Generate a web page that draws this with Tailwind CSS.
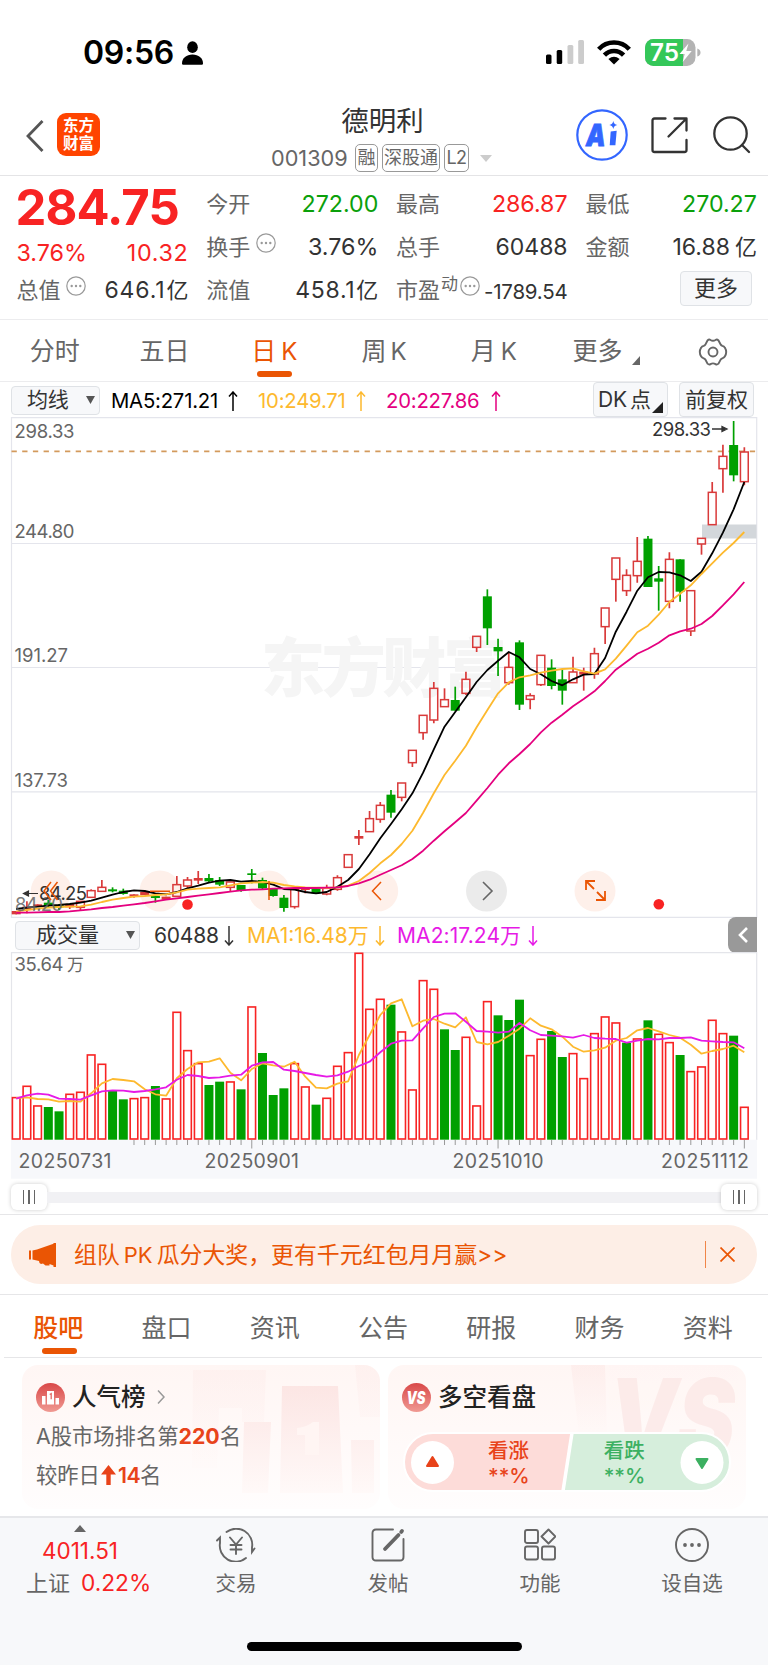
<!DOCTYPE html>
<html lang="zh-CN">
<head>
  <meta charset="UTF-8" />
  <meta name="viewport" content="width=device-width, initial-scale=1.0"/>
  <title>德明利 001309</title>
  <script src="https://cdn.jsdelivr.net/npm/@tailwindcss/browser@4"></script>
</head>
<body class="w-[768px] h-[1665px] overflow-hidden bg-white text-[#333] whitespace-nowrap font-['Inter','Noto_Sans_CJK_SC',sans-serif]">

  <!-- status bar -->
  <div class="h-[105px] flex justify-between items-start pt-[33px] pl-[83px] pr-[67px] text-black">
    <div class="flex items-center h-10 gap-[8px]">
      <span class="text-[32px] font-semibold leading-10 tracking-[-0.3px]">09:56</span>
      <svg class="w-[21px] h-6" viewBox="0 0 21 24"><ellipse cx="10.5" cy="6.2" rx="5.3" ry="5.9"/><path d="M0 22.5C0 17 4.5 13.5 10.5 13.5S21 17 21 22.5q0 1.2-1.2 1.2H1.2Q0 23.7 0 22.5z"/></svg>
    </div>
    <div class="flex items-center h-10 -mt-[1px]">
      <svg class="w-[38px] h-6" viewBox="0 0 38 24"><rect y="14.500" width="5.500" height="9.500" rx="1.500"/><rect x="10.700" y="10" width="5.500" height="14" rx="1.500"/><rect x="21.500" y="5" width="5.800" height="19" rx="1.500" fill="#ccc"/><rect x="32.200" width="5.800" height="24" rx="1.500" fill="#ccc"/></svg>
      <svg class="w-[34px] h-[25px] ml-[13px]" viewBox="0 0 34 25" fill="none" stroke="#000" stroke-width="4.600"><path d="M1.700 9.200C10 .3 24 .3 32.300 9.200"/><path d="M7.400 15.200C12.800 9.600 21.200 9.600 26.600 15.200"/><path d="M17 24.500l-5.600-5.400q5.600-4.600 11.200 0z" fill="#000" stroke="none"/></svg>
      <svg class="w-[56px] h-[27px] ml-[14px] overflow-visible" viewBox="0 0 56 27">
        <defs><clipPath id="batt"><rect width="50.500" height="27" rx="8.500"/></clipPath></defs>
        <g clip-path="url(#batt)"><rect width="51" height="27" fill="#b3b3b3"/><rect width="38" height="27" fill="#34c759"/></g>
        <path d="M52.300 9.500q3.200 1 3.200 4t-3.200 4z" fill="#b3b3b3"/>
        <text x="5" y="22.300" font-size="24.500" font-weight="600" fill="#fff" textLength="29" lengthAdjust="spacingAndGlyphs">75</text>
        <path d="M43.500 4.500L34.500 15h5.200l-2 8 9-11h-5.400z" fill="#fff"/>
      </svg>
    </div>
  </div>

  <!-- nav -->
  <header class="h-[71px] flex items-start border-b border-[#e4e4e6] pl-[26px]">
    <svg class="w-[18px] h-8 mt-[15px]" viewBox="0 0 18 32" fill="none" stroke="#555" stroke-width="2.800"><path d="M16.500 1L2 16l14.500 15"/></svg>
    <div class="ml-[13px] mt-2 size-[43px] rounded-[9px] bg-[#ff4400] text-white text-[15.500px] leading-[18px] font-bold text-center pt-[4px]">东方<br>财富</div>
    <div class="ml-[171px] w-[223px] mt-[-2px] flex flex-col">
      <h1 class="text-[27.500px] leading-[36px] self-center">德明利</h1>
      <div class="flex items-center text-[#666] h-[38px]">
        <span class="w-[84px] text-[21.700px]">001309</span>
        <span class="h-7 border border-[#999] rounded-[5px] w-[23px] text-[18px] leading-[26px] flex justify-center">融</span>
        <span class="ml-1 h-7 border border-[#999] rounded-[5px] w-[58px] text-[18px] leading-[26px] flex justify-center">深股通</span>
        <span class="ml-1 h-7 border border-[#999] rounded-[5px] w-[25px] text-[18px] leading-[26px] flex justify-center tracking-[-0.5px]">L2</span>
        <svg class="w-3 h-[7px] ml-[11px]" viewBox="0 0 12 7"><path d="M0 0h12L6 7z" fill="#ccc"/></svg>
      </div>
    </div>
    <svg class="w-[52px] h-[52px] ml-[82px] mt-[4px]" viewBox="0 0 52 52">
      <circle cx="26" cy="26" r="24.700" fill="#fff" stroke="#3366ff" stroke-width="2.200"/>
      <text x="10" y="36.500" font-size="30" font-weight="900" font-style="italic" fill="#3366ff" stroke="#3366ff" stroke-width=".8" textLength="19.500" lengthAdjust="spacingAndGlyphs">A</text>
      <path d="M34.700 22.500l6-.8-1.300 14.500h-5.700z" fill="#3366ff"/><path d="M37.300 12q.6 3.500 4 4-3.400.6-4 4-.6-3.400-4-4 3.400-.5 4-4z" fill="#3366ff"/>
    </svg>
    <svg class="w-[37px] h-[37px] ml-[23px] mt-3" viewBox="0 0 37 37" fill="none" stroke="#333" stroke-width="2.300" stroke-linecap="round" stroke-linejoin="round"><path d="M14.500 1.500H3.500q-2 0-2 2v29.500q0 2 2 2H33.500q2 0 2-2V23M23.500 1.500h12v12M35 2L17.500 19.500"/></svg>
    <svg class="w-[38px] h-[38px] ml-[25px] mt-[11px]" viewBox="0 0 38 38" fill="none" stroke="#333" stroke-width="2.300" stroke-linecap="round"><circle cx="17.500" cy="17.500" r="16.200"/><path d="M29 29l7 7"/></svg>
  </header>

  <!-- quote -->
  <section class="h-[144px] border-b border-[#ececee] grid grid-cols-[172px_172px_171.5px_171.5px] gap-x-[17.8px] pl-[16.5px] text-[22px] leading-[30px]">
    <div>
      <div class="text-[49px] leading-[60px] font-bold text-[#f82323] tracking-[-0.9px] ml-[-1px] mt-[2px]">284.75</div>
      <div class="flex justify-between text-[#f82323] text-[23.300px]"><span>3.76%</span><span class="tracking-[0.7px]">10.32</span></div>
      <div class="flex justify-between mt-[7px]"><span class="flex text-[#666] gap-[5px]">总值<svg class="size-5 shrink-0 mt-px" viewBox="0 0 20 20"><use href="#dots"/></svg></span><span class="text-[23px] tracking-[0.9px]">646.1<i class="not-italic text-[22px] ml-px tracking-normal">亿</i></span></div>
    </div>
    <div class="pt-[13px] space-y-[13px]">
      <div class="flex justify-between"><span class="text-[#666]">今开</span><span class="text-[#0ba00b] text-[23.200px]">272.00</span></div>
      <div class="flex justify-between"><span class="flex text-[#666] gap-[6px]">换手<svg class="size-5 shrink-0 mt-px" viewBox="0 0 20 20"><use href="#dots"/></svg></span><span class="text-[23.300px]">3.76%</span></div>
      <div class="flex justify-between"><span class="text-[#666]">流值</span><span class="text-[23px] tracking-[0.7px]">458.1<i class="not-italic text-[22px] ml-px tracking-normal">亿</i></span></div>
    </div>
    <div class="pt-[13px] space-y-[13px]">
      <div class="flex justify-between"><span class="text-[#666]">最高</span><span class="text-[#f82323] text-[23.200px]">286.87</span></div>
      <div class="flex justify-between"><span class="text-[#666]">总手</span><span class="text-[23px]">60488</span></div>
      <div class="flex justify-between"><span class="flex text-[#666]">市盈<i class="not-italic text-[17px] leading-[19px] ml-px">动</i><svg class="size-5 shrink-0 mt-px ml-[2px]" viewBox="0 0 20 20"><use href="#dots"/></svg></span><span class="text-[20.500px] leading-[34px] tracking-[-0.2px]">-1789.54</span></div>
    </div>
    <div class="pt-[13px] space-y-[13px]">
      <div class="flex justify-between"><span class="text-[#666]">最低</span><span class="text-[#0ba00b] text-[23.200px]">270.27</span></div>
      <div class="flex justify-between"><span class="text-[#666]">金额</span><span class="text-[23px]">16.88<i class="not-italic text-[22px] ml-[5px]">亿</i></span></div>
      <div class="flex justify-end"><button class="w-[72px] h-[35px] mt-[-4px] mr-[5px] rounded border border-[#dfe2e6] bg-[#f7f8fa] leading-[33px]">更多</button></div>
    </div>
  </section>

  <!-- period tabs -->
  <nav class="h-[62px] grid grid-cols-7 border-b border-[#ececee] text-[25px] leading-[62px] text-[#666] text-center">
    <span>分时</span>
    <span>五日</span>
    <span class="relative text-[#ea5504]">日<i class="not-italic ml-[5px] text-[24px]">K</i><b class="absolute left-[38px] top-[51px] w-[35px] h-[5.500px] rounded-full bg-[#ea5504]"></b></span>
    <span>周<i class="not-italic ml-[4px] text-[24px]">K</i></span>
    <span>月<i class="not-italic ml-[5px] text-[24px]">K</i></span>
    <span class="relative pr-[12px]">更多<svg class="absolute w-2 h-[9px] right-[18px] top-[36px]" viewBox="0 0 8 9"><path d="M8 0v9H0z" fill="#666"/></svg></span>
    <span class="flex items-center justify-center"><svg class="w-[30px] h-[28px]" viewBox="0 0 30 28" fill="none" stroke="#666" stroke-width="1.900" stroke-linejoin="round"><path d="M9.500 2.500q1.500-1.500 3-.5 2.500 1.500 5 0 1.500-1 3 .5l2 3.800q.5 1 1.800 1.500 1.800.5 2.500 1.800 2.800 4.500 0 9-.7 1.200-2.500 1.700-1.300.5-1.800 1.500l-2 3.800q-1.500 1.400-3 .5-2.500-1.500-5 0-1.500.900-3-.5l-2-3.800q-.5-1-1.800-1.500-1.800-.5-2.500-1.700-2.800-4.500 0-9 .7-1.300 2.500-1.800 1.300-.5 1.800-1.500z"/><circle cx="15" cy="14" r="4.500"/></svg></span>
  </nav>

  <!-- moving averages -->
  <div class="h-[35px] flex items-center pl-[11px] pr-[14px] text-[20.300px] leading-[30px] tracking-[-0.2px]">
    <button class="w-[89px] h-[29px] flex items-center justify-between pl-[15px] pr-[4px] mt-[1px] rounded border border-[#dfe2e6] bg-[#f7f8fa] text-[21px] leading-[28px]">均线<svg class="w-[9px] h-2" viewBox="0 0 9 8"><path d="M0 0h9L4.500 8z" fill="#555"/></svg></button>
    <span class="ml-[11px] w-[147px] text-black flex items-center justify-between pr-[20px] pt-[2px]">MA5:271.21<svg class="w-[10px] h-5" viewBox="0 0 10 20"><use href="#up"/></svg></span>
    <span class="w-[128px] text-[#fdb92e] flex items-center justify-between pr-[20px] pt-[2px]">10:249.71<svg class="w-[10px] h-5" viewBox="0 0 10 20"><use href="#up"/></svg></span>
    <span class="w-[115px] text-[#e4007f] flex items-center justify-between pt-[2px]">20:227.86<svg class="w-[10px] h-5" viewBox="0 0 10 20"><use href="#up"/></svg></span>
    <button class="relative ml-auto w-[75px] h-[35px] rounded border border-[#dfe2e6] bg-[#f7f8fa] text-left pl-[4px] text-[21px] leading-[34px]">DK<i class="not-italic ml-[3px]">点</i><svg class="absolute right-1 bottom-[3px] size-[11px]" viewBox="0 0 11 11"><path d="M11 0v11H0z" fill="#222"/></svg></button>
    <button class="ml-[11px] w-[75px] h-[35px] rounded border border-[#dfe2e6] bg-[#f7f8fa] text-[21px] leading-[34px]">前复权</button>
  </div>

  <!-- candles -->
  <svg id="kline" class="block w-[768px] h-[501px]" viewBox="0 0 768 501" fill="none"></svg>

  <!-- volume header -->
  <div class="h-[34px] flex items-center pl-[15px] pr-[11px] text-[21px]">
    <button class="w-[125px] h-[29px] flex items-center justify-between pl-[20px] pr-[4px] rounded border border-[#dfe2e6] bg-[#f7f8fa] leading-[28px]">成交量<svg class="w-[9px] h-2" viewBox="0 0 9 8"><path d="M0 0h9L4.500 8z" fill="#555"/></svg></button>
    <span class="ml-[14px] w-[80px] flex items-center justify-between pt-[2px] tracking-[-0.2px]">60488<svg class="w-[10px] h-5" viewBox="0 0 10 20"><use href="#down"/></svg></span>
    <span class="ml-[13px] w-[138px] flex items-center justify-between pt-[2px] text-[#fdb92e]">MA1:16.48万<svg class="w-[10px] h-5" viewBox="0 0 10 20"><use href="#down"/></svg></span>
    <span class="ml-3 w-[141px] flex items-center justify-between pt-[2px] text-[#e61ae6] tracking-[0.1px]">MA2:17.24万<svg class="w-[10px] h-5" viewBox="0 0 10 20"><use href="#down"/></svg></span>
    <div class="ml-auto w-[29px] h-[36px] mt-[-1px] rounded-l-lg bg-[#999] flex items-center justify-center"><svg class="w-[10px] h-4" viewBox="0 0 10 16" fill="none" stroke="#fff" stroke-width="2.600"><path d="M9 1L2 8l7 7"/></svg></div>
  </div>

  <svg id="volume" class="block w-[768px] h-[227px]" viewBox="0 0 768 227" fill="none"></svg>

  <!-- range slider -->
  <div class="h-[35px] mx-[11px] pt-px flex items-center">
    <div class="w-9 h-[26px] rounded-md bg-white shadow-[0_0_4px_rgba(0,0,0,.2)] flex items-center justify-center gap-[4px]"><i class="w-[1.500px] h-[14px] bg-[#666]"></i><i class="w-[1.500px] h-[14px] bg-[#666]"></i><i class="w-[1.500px] h-[14px] bg-[#666]"></i></div>
    <div class="grow h-[11px] bg-[#f1f1f4]"></div>
    <div class="w-9 h-[26px] rounded-md bg-white shadow-[0_0_4px_rgba(0,0,0,.2)] flex items-center justify-center gap-[4px]"><i class="w-[1.500px] h-[14px] bg-[#666]"></i><i class="w-[1.500px] h-[14px] bg-[#666]"></i><i class="w-[1.500px] h-[14px] bg-[#666]"></i></div>
  </div>

  <!-- banner -->
  <div class="h-[81px] border-y border-[#e6e6e8] px-[11px] pt-[10px]">
    <div class="h-[59px] rounded-[29px] bg-[#fdeee6] text-[#ea5504] flex items-center pl-[18px] pr-[22px]">
      <svg class="w-7 h-6" viewBox="0 0 28 24" fill="#ea5504"><path d="M0 7.500h2v9H0zM3.500 7.500L8 6.500 24.500.8V0H27v24h-2.500v-1.500l-4-1.500v1.500h-4L14 20.500l-2 .5q-2-.5-2-3l-6.500-1.500z"/></svg>
      <span class="ml-[17px] pt-[2px] text-[22.900px]">组队<i class="not-italic text-[22px] mx-[4px]">PK</i>瓜分大奖，更有千元红包月月赢&gt;&gt;</span>
      <i class="ml-auto w-[1.500px] h-[27px] bg-[#f08548]"></i>
      <svg class="ml-[14px] size-[15px]" viewBox="0 0 15 15" stroke="#ea5504" stroke-width="1.700"><path d="M.5.5l14 14M14.500.5l-14 14"/></svg>
    </div>
  </div>

  <!-- content tabs -->
  <nav class="h-[63px] ml-1 mr-[6px] grid grid-cols-7 border-b border-[#e6e6e8] text-[25px] leading-[66px] text-[#666] text-center">
    <span class="relative text-[#ea5504] font-medium">股吧<b class="absolute left-[38px] top-[53px] w-[35px] h-[5.500px] rounded-full bg-[#ea5504]"></b></span>
    <span>盘口</span><span>资讯</span><span>公告</span><span>研报</span><span>财务</span><span>资料</span>
  </nav>

  <!-- cards -->
  <section class="h-[158px] flex gap-2 px-[22px] pt-[7px]">
    <div class="relative w-[358px] h-[144px] rounded-2xl overflow-hidden bg-linear-to-b from-[#fff6f4] to-[#fffdfd]">
      <svg class="absolute inset-0 w-full h-full" viewBox="0 0 358 144">
        <defs><linearGradient id="fade" x2="0" y2="1"><stop stop-color="#fbe0de"/><stop offset="1" stop-color="#fff8f7"/></linearGradient></defs>
        <path d="M171 5h73l-2 52h-22v-14h-23l-2 60h-25zM333 0h25v52h-20z" fill="url(#fade)" opacity=".25"/>
        <path d="M222 57h27l-3 71h-26zM260 21h56l5 107h-63zM329 75h23v53h-22z" fill="url(#fade)" opacity=".75"/>
        <path d="M275 63q10-1 16-6h6v33h-14V70h-8z" fill="#fff5f3"/>
      </svg>
      <div class="relative pl-[14px] pt-[16px]">
        <div class="flex items-center h-[32px]">
          <svg class="size-[29px]" viewBox="0 0 29 29"><defs><linearGradient id="badge" x2="0" y2="1"><stop stop-color="#d94848"/><stop offset="1" stop-color="#f09a93"/></linearGradient></defs><circle cx="14.500" cy="14.500" r="14.500" fill="url(#badge)"/><path d="M6 13h3.500v8.500H6zM11 8h7v13.500h-7zM19.500 15H23v6.500h-3.500z" fill="#fff"/><path d="M13.700 11.500l1.500-.8v5.500" fill="none" stroke="#e36a65" stroke-width="1.300"/></svg>
          <b class="ml-[7px] text-[24.500px] font-medium text-[#222]">人气榜</b>
          <svg class="ml-[11px] w-2 h-[14px]" viewBox="0 0 8 14" fill="none" stroke="#999" stroke-width="1.500"><path d="M1 .5l6 6.500-6 6.500"/></svg>
        </div>
        <div class="mt-[7px] text-[21.300px] leading-[32px] text-[#666]">A股市场排名第<b class="text-[#e8431a]">220</b>名</div>
        <div class="mt-[7px] text-[21.300px] leading-[32px] text-[#666] flex items-center">较昨日<svg class="w-[15px] h-5 mx-[1px]" viewBox="0 0 15 20"><path d="M7.500 0L15 9.500H9.700V20H5.300V9.500H0z" fill="#e8431a"/></svg><b class="text-[#e8431a] font-semibold ml-[1px] tracking-[-0.5px]">14</b>名</div>
      </div>
    </div>
    <div class="relative w-[358px] h-[144px] rounded-2xl overflow-hidden bg-linear-to-b from-[#fff6f4] to-[#fffdfd]">
      <svg class="absolute inset-0 w-full h-full" viewBox="0 0 358 144">
        <path d="M183 0h34l2 70h-28z" fill="url(#fade)" opacity=".35"/>
        <text x="221" y="92" font-size="108" font-weight="900" font-style="italic" fill="#fbe6e4" opacity=".7" textLength="126" lengthAdjust="spacingAndGlyphs">VS</text>
      </svg>
      <div class="relative pl-[14px] pt-[16px]">
        <div class="flex items-center h-[32px]">
          <svg class="size-[29px]" viewBox="0 0 29 29"><circle cx="14.500" cy="14.500" r="14.500" fill="url(#badge)"/><text x="4.500" y="20.500" font-size="17" font-weight="900" font-style="italic" fill="#fff" textLength="19" lengthAdjust="spacingAndGlyphs">VS</text></svg>
          <b class="ml-[7px] text-[24.500px] font-medium text-[#222]">多空看盘</b>
        </div>
        <div class="relative mt-[20px] ml-[2px] w-[326px] h-[58px]">
          <svg class="absolute inset-0 w-full h-full overflow-visible" viewBox="0 0 326 58">
            <path d="M29 0H168L159 58H29A29 29 0 0 1 29 0z" fill="#fddcd9" stroke="#fff" stroke-width="2"/>
            <path d="M168 0H297A29 29 0 0 1 297 58H159z" fill="#d6eedc" stroke="#fff" stroke-width="2"/>
            <path d="M168 0l-9 58" stroke="#fff" stroke-width="3.500"/>
            <circle cx="28.500" cy="29.500" r="21.500" fill="#fff"/><circle cx="298" cy="29.500" r="21.500" fill="#fff"/>
            <path d="M28.500 24l5.500 9h-11z" fill="#e8431a" stroke="#e8431a" stroke-width="2" stroke-linejoin="round"/>
            <path d="M298 35l5.500-9h-11z" fill="#3cb061" stroke="#3cb061" stroke-width="2" stroke-linejoin="round"/>
          </svg>
          <div class="relative flex text-[20.500px] leading-[24.500px] font-medium pl-[84px] pt-[6px] gap-[74px]">
            <div class="text-[#e8431a]">看涨<br>**%</div>
            <div class="text-[#3cb061]">看跌<br>**%</div>
          </div>
        </div>
      </div>
    </div>
  </section>

  <!-- bottom bar -->
  <footer class="h-[150px] bg-[#f7f8fa] border-t-2 border-[#e6e7ea]">
    <div class="flex h-[124px] text-[20.500px] text-[#666]">
      <div class="w-[160px] flex flex-col items-center pt-[7px]">
        <svg class="w-3 h-[7px]" viewBox="0 0 12 7"><path d="M6 0l6 7H0z" fill="#666"/></svg>
        <span class="text-[#f82323] text-[22.500px] leading-8 mt-[3px]">4011.51</span>
        <span class="text-[22px] leading-[30px] mt-px pl-[26px] w-full">上证<span class="text-[#f82323] ml-[11px] text-[22.700px]">0.22%</span></span>
      </div>
      <div class="w-[152px] flex flex-col items-center pt-[10px]">
        <svg class="w-[40px] h-[34px]" viewBox="0 0 40 34" fill="none" stroke="#666" stroke-width="1.900" stroke-linecap="round"><path d="M10.500 4A16 16 0 0 1 36 19.500v4.500l2.500-3.500M30 30A16 16 0 0 1 4 15V9.500L1 12.500M14 9.500l6 7 6-7M20 16.500V26M14.500 17h11M14.500 21.500h11"/></svg>
        <span class="mt-[7px]">交易</span>
      </div>
      <div class="w-[152px] flex flex-col items-center pt-[10px]">
        <svg class="w-[34px] h-[34px]" viewBox="0 0 34 34" fill="none" stroke="#666" stroke-width="1.900" stroke-linecap="round"><path d="M22 1.500H5q-3.500 0-3.500 3.500v24q0 3.500 3.500 3.500h24q3.500 0 3.500-3.500V11"/><path d="M31 3l-.8.9M27.500 7L14 21" stroke-width="3.800"/></svg>
        <span class="mt-[7px]">发帖</span>
      </div>
      <div class="w-[152px] flex flex-col items-center pt-[10px]">
        <svg class="w-[32px] h-[34px]" viewBox="0 0 32 34" fill="none" stroke="#666" stroke-width="1.900" stroke-linejoin="round"><rect x="1" y="2" width="13" height="13" rx="2"/><rect x="1" y="18.500" width="13" height="13" rx="2"/><rect x="18" y="18.500" width="13" height="13" rx="2"/><path d="M24.500 1.500l7 7-7 7-7-7z"/></svg>
        <span class="mt-[7px]">功能</span>
      </div>
      <div class="w-[152px] flex flex-col items-center pt-[10px]">
        <svg class="w-[34px] h-[34px]" viewBox="0 0 34 34"><circle cx="17" cy="17" r="16" fill="none" stroke="#666" stroke-width="1.900"/><g fill="#666"><circle cx="10" cy="17" r="1.900"/><circle cx="17" cy="17" r="1.900"/><circle cx="24" cy="17" r="1.900"/></g></svg>
        <span class="mt-[7px]">设自选</span>
      </div>
    </div>
    <div class="mx-auto w-[275px] h-[9px] rounded-full bg-black"></div>
  </footer>

  <!-- shared symbols -->
  <svg class="hidden">
    <symbol id="dots" viewBox="0 0 20 20"><circle cx="10" cy="10" r="9.200" fill="none" stroke="#999" stroke-width="1.200"/><g fill="#999"><circle cx="5.700" cy="10" r="1.200"/><circle cx="10" cy="10" r="1.200"/><circle cx="14.300" cy="10" r="1.200"/></g></symbol>
    <symbol id="up" viewBox="0 0 10 20"><path d="M5 20V1M1 5.500L5 1l4 4.500" fill="none" stroke="currentColor" stroke-width="1.500"/></symbol>
    <symbol id="down" viewBox="0 0 10 20"><path d="M5 0v19M1 14.500L5 19l4-4.500" fill="none" stroke="currentColor" stroke-width="1.500"/></symbol>
  </svg>

  <script>
    const RED = "#d93a3a", GREEN = "#00a000";
    const x = i => 16.2 + 10.708 * i;
    const at = (top, ys) => ys.map(y => top + y / 3);
    const line = (ys, color, w) =>
      `<polyline points="${ys.map((y, i) => x(i).toFixed(1) + "," + y.toFixed(1)).join(" ")}" stroke="${color}" stroke-width="${w}" stroke-linejoin="round"/>`;

    // [up/down, body top, body bottom, wick top, wick bottom]
    const shift = (top, rows) => rows.map(r => [r[0], ...at(top, r.slice(1))]);
    const candles = [
      ...shift(383, [
        ["r",333,343,333,343],["r",320,328,304,340],["r",313,320,313,320],["g",308,318,300,322],["g",316,322,312,330],
        ["r",312,322,312,327],["r",304,322,304,330],["r",272,292,268,292],["r",262,274,240,274],["g",268,274,262,277],
        ["g",272,282,266,284],["r",283,290,283,293],["r",276,285,270,285],["g",288,294,284,308],["r",290,299,290,299],
        ["r",254,289,228,289],["r",240,258,231,264],["r",234,242,213,252],["g",234,244,222,246],["g",240,254,231,258],
        ["r",246,262,246,275],["g",255,272,255,275],["g",220,225,207,250],["g",240,265,233,268],["g",264,288,264,290],
        ["g",293,324,285,335],["r",268,320,268,326],["r",265,270,262,280],["g",265,280,262,280],["r",265,282,254,286],
        ["r",233,268,226,272],["r",164,202,164,202],["r",108,116,90,135],["r",56,95,33,95],["r",16,58,6,68]
      ]),
      ...shift(223, [
        ["g",464,518,450,533],["r",429,472,429,484],["r",331,368,331,381],["r",226,278,226,299],["r",145,240,126,250],
        ["r",179,200,145,200],["g",180,212,140,212],["r",118,160,95,165]
      ]),
      ...shift(-7, [
        ["r",679,712,679,726],["g",559,655,538,705],["g",711,724,686,798],["r",772,818,728,824],["g",697,884,691,900],
        ["r",857,868,850,898],["r",736,824,736,828],["g",773,828,748,838],["g",808,842,780,884],["r",786,818,740,818],
        ["r",785,794,773,842],["r",731,792,713,806],["r",594,650,594,702],["r",444,508,444,575],["r",496,542,478,558],
        ["r",454,497,381,518],["g",386,531,378,531],["g",505,515,468,602],["r",448,574,427,595],["g",448,545,448,575],
        ["r",542,663,542,678],["r",385,402,385,434],["r",247,344,216,344],["r",139,176,104,248],["g",105,196,33,214],
        ["r",126,215,112,226]
      ])
    ];

    const ma5 = [
      ...at(383, [327,323,320,317,315,312,308,302,293,284,276,271,273,280,283,276,265,257,248,242,240,245,243,246,254,267,269,276,280,276,260,240,207,163,115]),
      ...at(223, [552,508,460,398,328,260,216,172,126,90,62,36,52,87,103,123,136,118,104,102]),
      ...at(-7, [744,665,605,542,502,486,487,496,513,485,430,368,298,216])
    ];
    const ma10 = [
      ...at(383, [334,330,326,323,321,320,319,314,306,299,294,290,288,285,283,277,269,266,264,262,256,250,248,246,248,255,259,262,263,264,262,257,243,219,190]),
      ...at(223, [645,612,572,518,460,405,362,317,262,210,160,127,112,106,98,92,87,85,94,101,88]),
      ...at(-7, [746,707,667,647,614,576,551,526,492,460,428,399,366])
    ];
    const ma20 = [
      ...at(383, [338,338,337,336,336,334,331,328,324,321,317,313,309,304,299,295,291,287,283,279,275,271,269,268,266,265,264,264,264,263,262,258,250,239,224]),
      ...at(223, [690,676,657,632,602,574,547,519,482,444,404,370,342,312,277,248,224,199,177,154,123,89]),
      ...at(-7, [755,731,716,698,676,664,656,642,618,586,553,516])
    ];

    const candle = ([kind, top, bottom, high, low], i) => {
      const cx = x(i);
      if (kind === "g" || bottom - top < 3.5) {
        const c = kind === "g" ? GREEN : RED;
        return `<path d="M${cx} ${high}V${low}" stroke="${c}" stroke-width="1.7"/><rect x="${cx - 4.5}" y="${top}" width="9" height="${bottom - top}" fill="${c}"/>`;
      }
      return `<path d="M${cx} ${high}V${top}M${cx} ${bottom}V${low}" stroke="${RED}" stroke-width="1.7"/>
        <rect x="${cx - 3.9}" y="${top}" width="7.8" height="${bottom - top}" stroke="${RED}" stroke-width="1.5"/>`;
    };
    const label = (tx, ty, text, w, extra = "") => `<text x="${tx}" y="${ty}" font-size="18.5" fill="#666" textLength="${w}" ${extra}>${text}</text>`;
    const disc = (cx, fill) => `<circle cx="${cx}" cy="474" r="20.5" fill="${fill}"/>`;

    document.getElementById("kline").innerHTML = `
      <path d="M11.500 501V.7H756.700V500.300H11.500M11.500 126.500H756.700M11.500 250.500H756.700M11.500 374.800H756.700" stroke="#e4e5ec" stroke-width="1.200"/>
      <text x="261" y="274" font-size="64" font-weight="900" fill="#f5f5f5" textLength="246">东方财富</text>
      <rect x="702" y="107.500" width="54.500" height="14" fill="#d3d7db"/>
      ${[51.3, 160, 269, 377.7].map(c => disc(c, "#fef0ea")).join("")}${disc(486.5, "#ebebeb")}${disc(595, "#fef0ea")}
      <path d="M11.500 34.300H756" stroke="#d39a5c" stroke-width="1.800" stroke-dasharray="5.300 5.400"/>
      ${label(14.5, 20.6, "298.33", 60)}${label(14.5, 120.6, "244.80", 60)}${label(14.5, 245.3, "191.27", 53.5)}${label(14.5, 370.3, "137.73", 53.5)}
      ${candles.map(candle).join("")}
      ${line(ma5, "#000", 1.8)}${line(ma10, "#fdb92e", 1.8)}${line(ma20, "#e4007f", 1.8)}
      ${label(15, 494, "84.20", 48, 'opacity=".85"')}
      <text x="652" y="19" font-size="18.500" fill="#333" textLength="59">298.33</text>
      <path d="M712 12h11M722 9.500l5 2.500-5 2.500z" stroke="#333" stroke-width="1.300" fill="#333"/>
      <text x="39" y="483" font-size="18.500" fill="#333" textLength="48">84.25</text>
      <path d="M38 476.500H27M28.500 474l-5 2.500 5 2.500z" stroke="#333" stroke-width="1.200" fill="#333"/>
      <g stroke="#ea5504" stroke-width="1.500">
        <path d="M51 465l-7 9 7 9M57.500 465l-7 9 7 9M150 474.300h20M269 464v19"/>
        <path d="M381 465l-8.500 9 8.500 9"/>
        <path d="M586 473v-9h9M586 464l8 8M596 483h9v-9M605 483l-8-8" stroke-width="1.800"/>
      </g>
      <path d="M483 465l9 9-9 9" stroke="#666" stroke-width="1.600"/>
      <circle cx="187.500" cy="487.500" r="5.300" fill="#f82323"/><circle cx="658.800" cy="487.300" r="5.300" fill="#f82323"/>
    `;

    // volume bars: top edge measured in thirds of a pixel, leading letter is the direction
    const volumes = "r532 r498 r557 g561 g574 r522 r516 r404 r432 g513 g538 r535 r532 g498 r536 r276 r391 r430 g495 g485 r485 g508 r260 g399 g525 g505 r430 r500 g554 r534 r438 r397 r99 r267 r237 g254 r335 r509 r181 r207 g328 g390 r351 r557 r244 g286 g300 g239 r406 r357 g333 g411 r400 r475 r340 r290 r308 g368 r356 g301 r342 r367 g405 r454 r440 r300 r340 g347 r561".split(" ");
    const vma1 = [534,532,537,538,545,543,545,520,490,477,480,484,508,523,527,475,447,427,425,415,458,481,447,430,436,440,425,470,503,505,491,484,405,345,285,250,238,319,302,297,311,322,292,366,373,366,347,326,295,317,328,350,380,395,391,383,362,354,331,324,334,345,353,374,401,393,387,377,397];
    const vma2 = [536,526,521,524,536,537,539,526,514,511,512,516,513,508,502,479,465,468,474,472,467,464,437,427,426,449,453,459,465,470,466,455,438,425,397,371,362,361,325,291,281,280,305,333,335,338,335,309,331,345,347,349,353,345,354,356,357,368,362,357,358,354,354,352,362,364,366,367,385];
    const bar = (v, i) => {
      const top = +v.slice(1) / 3 - 32, cx = x(i);
      return v[0] === "g"
        ? `<rect x="${cx - 4.5}" y="${top}" width="9" height="${187.7 - top}" fill="${GREEN}"/>`
        : `<rect x="${cx - 3.8}" y="${top + 0.3}" width="7.6" height="${186.700 - top}" stroke="#f82323" stroke-width="1.600"/>`;
    };
    const tick = i => `<path d="M${x(i)} 188v${[22, 45, 68].includes(i) ? 8.500 : 5}" stroke="#999" stroke-width="1"/>`;
    const date = (tx, text, w) => `<text x="${tx}" y="216.300" font-size="19.500" fill="#666" textLength="${w}">${text}</text>`;

    document.getElementById("volume").innerHTML = `
      <path d="M11.500 188V.7H756.700V188" stroke="#e4e5ea" stroke-width="1.200"/>
      <rect x="11" y="187.700" width="746" height="39" fill="#f7f8fb"/>
      ${label(14.5, 18.5, "35.64", 49)}<text x="67" y="18.500" font-size="17" fill="#666">万</text>
      ${volumes.map(bar).join("")}
      ${line(at(-32, vma1), "#fdb92e", 1.8)}${line(at(-32, vma2), "#e61ae6", 1.8)}
      ${volumes.map((v, i) => i > 10 ? tick(i) : "").join("")}
      ${date(18.5, "20250731", 93)}${date(204.5, "20250901", 94.5)}${date(452.5, "20251010", 91)}${date(661, "20251112", 88)}
    `;
  </script>
</body>
</html>
